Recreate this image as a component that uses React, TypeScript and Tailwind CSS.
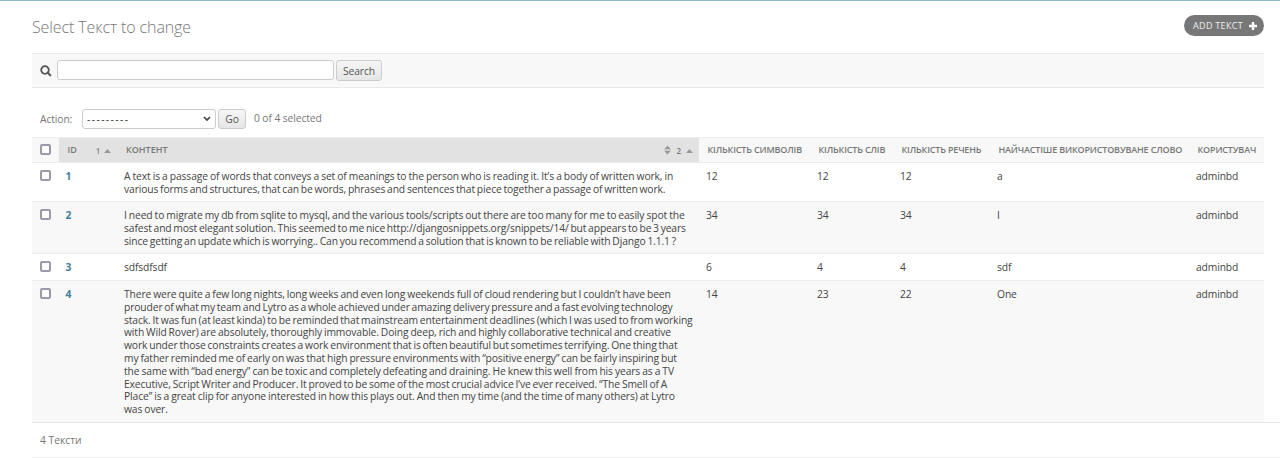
import type { ReactNode } from "react";

type Line = [text: string, spacing: string];
type Row = { id: number; height: string; lines: Line[]; values: string[]; shaded: boolean };

const columns =
  "grid grid-cols-[27px_58px_582px_111px_83px_97px_199px_75px] w-[1232px]";

const rows: Row[] = [
  {
    id: 1,
    height: "h-[39px] border-b border-[#ececec]",
    shaded: false,
    lines: [
      ["A text is a passage of words that conveys a set of meanings to the person who is reading it. It’s a body of written work, in", "[word-spacing:-0.43px]"],
      ["various forms and structures, that can be words, phrases and sentences that piece together a passage of written work.", "[word-spacing:-0.7px]"],
    ],
    values: ["12", "12", "12", "a", "adminbd"],
  },
  {
    id: 2,
    height: "h-[52px] border-b border-[#ececec]",
    shaded: true,
    lines: [
      ["I need to migrate my db from sqlite to mysql, and the various tools/scripts out there are too many for me to easily spot the", "[word-spacing:-0.48px]"],
      ["safest and most elegant solution. This seemed to me nice http://djangosnippets.org/snippets/14/ but appears to be 3 years", "[word-spacing:-0.75px]"],
      ["since getting an update which is worrying.. Can you recommend a solution that is known to be reliable with Django 1.1.1 ?", "[word-spacing:-0.7px]"],
    ],
    values: ["34", "34", "34", "I", "adminbd"],
  },
  {
    id: 3,
    height: "h-[27px] border-b border-[#ececec]",
    shaded: false,
    lines: [["sdfsdfsdf", "[word-spacing:0px]"]],
    values: ["6", "4", "4", "sdf", "adminbd"],
  },
  {
    id: 4,
    height: "h-[141px]",
    shaded: true,
    lines: [
      ["There were quite a few long nights, long weeks and even long weekends full of cloud rendering but I couldn’t have been", "[word-spacing:-0.5px]"],
      ["prouder of what my team and Lytro as a whole achieved under amazing delivery pressure and a fast evolving technology", "[word-spacing:-0.75px]"],
      ["stack. It was fun (at least kinda) to be reminded that mainstream entertainment deadlines (which I was used to from working", "[word-spacing:-0.63px]"],
      ["with Wild Rover) are absolutely, thoroughly immovable. Doing deep, rich and highly collaborative technical and creative", "[word-spacing:-0.55px]"],
      ["work under those constraints creates a work environment that is often beautiful but sometimes terrifying. One thing that", "[word-spacing:-0.68px]"],
      ["my father reminded me of early on was that high pressure environments with “positive energy” can be fairly inspiring but", "[word-spacing:-0.6px]"],
      ["the same with “bad energy” can be toxic and completely defeating and draining. He knew this well from his years as a TV", "[word-spacing:-0.47px]"],
      ["Executive, Script Writer and Producer. It proved to be some of the most crucial advice I’ve ever received. “The Smell of A", "[word-spacing:-0.6px]"],
      ["Place” is a great clip for anyone interested in how this plays out. And then my time (and the time of many others) at Lytro", "[word-spacing:-0.48px]"],
      ["was over.", "[word-spacing:-0.5px]"],
    ],
    values: ["14", "23", "22", "One", "adminbd"],
  },
];

function Checkbox() {
  return (
    <input
      type="checkbox"
      className="block size-[11px] appearance-none rounded-[2px] border-2 border-[#9a9aa8] bg-white"
    />
  );
}

function Up() {
  return (
    <svg width="7" height="4" viewBox="0 0 7 4" className="block">
      <path d="M0 4 3.5 0 7 4Z" fill="#999" />
    </svg>
  );
}

function Head({ children }: { children: ReactNode }) {
  return <div className="pl-[8.5px] tracking-[-0.17px] whitespace-nowrap">{children}</div>;
}

export default function App() {
  return (
    <div className="h-[458px] overflow-hidden border-t border-[#86b8d0] bg-white pl-8 font-['Open_Sans',sans-serif] text-[10.3px] leading-[12.8px] text-[#444]">
      <header className="flex h-[52px] w-[1232px] justify-between">
        <h1 className="pt-[15px] text-[16px] leading-[22px] font-light tracking-[-0.11px] text-[#777]">Select Текст to change</h1>
        <button className="mt-[14px] flex h-[21px] w-[80px] items-center justify-center gap-[6px] rounded-full bg-[#777] pt-px pl-[2px] text-[9px] tracking-[0.3px] text-[#eee]">
          ADD ТЕКСТ
          <svg width="8" height="8" viewBox="0 0 8 8" className="mb-px">
            <path d="M4 0V8M0 4H8" stroke="#fff" strokeWidth="2.4" />
          </svg>
        </button>
      </header>
      <div className="flex h-[35px] w-[1232px] items-center border-y border-[#e9e9e9] bg-[#f8f8f8] pl-2">
        <svg width="12" height="12" viewBox="0 0 12 12" className="mt-px">
          <circle cx="5" cy="5" r="3.8" fill="none" stroke="#555" strokeWidth="1.8" />
          <path d="m7.8 7.8 2.6 2.6" stroke="#555" strokeWidth="2" strokeLinecap="round" />
        </svg>
        <input className="mb-px ml-[5px] h-5 w-[277px] rounded-[3px] border border-[#ccc] bg-white" />
        <button className="ml-[2px] h-[21px] w-[46px] rounded-[3px] border border-[#ccc] bg-linear-to-b from-[#f6f6f6] to-[#e6e6e6] pt-px tracking-[-0.1px] text-[#555]">
          Search
        </button>
      </div>
      <div className="flex h-[49px] items-start pt-[21px] pl-2 tracking-[-0.1px] text-[#777]">
        <span className="w-[42px] pt-[4px]">Action:</span>
        <div className="flex h-5 w-[134px] items-center justify-between rounded-[3px] border border-[#ccc] bg-white px-[4px] text-[#333]">
          <span className="tracking-[1.4px]">---------</span>
          <svg width="8" height="6" viewBox="0 0 8 6">
            <path d="m1 1 3 3 3-3" fill="none" stroke="#444" strokeWidth="1.7" />
          </svg>
        </div>
        <button className="ml-[2px] h-5 w-7 rounded-[3px] border border-[#ccc] bg-linear-to-b from-[#f6f6f6] to-[#e6e6e6] text-[#555]">
          Go
        </button>
        <span className="pt-[3px] pl-2">0 of 4 selected</span>
      </div>
      <div className={`${columns} h-[26px] items-center border-y border-[#ececec] bg-[#f8f8f8] text-[9px] font-semibold text-[#777]`}>
        <div className="pb-[2px] pl-2"><Checkbox /></div>
        <div className="flex h-full items-center bg-[#e2e2e2] pl-[8.5px]">
          <span>ID</span>
          <span className="ml-[19px] pt-[2px] text-[8px] text-[#888]">1</span>
          <span className="ml-[4px] pt-[2px]"><Up /></span>
        </div>
        <div className="flex h-full items-center bg-[#e2e2e2] pr-[6px] pl-[9px]">
          <span className="grow">КОНТЕНТ</span>
          <svg width="7" height="12" viewBox="0 0 7 12">
            <path d="M.5 5 3.5 1.5 6.5 5ZM.5 7h6L3.5 10.5Z" fill="#999" />
            <path d="M0 6h7" stroke="#999" strokeWidth=".6" />
          </svg>
          <span className="ml-[5px] pt-[2px] text-[8px] text-[#777]">2</span>
          <span className="ml-[5px] pt-[2px]"><Up /></span>
        </div>
        <Head>КІЛЬКІСТЬ СИМВОЛІВ</Head>
        <Head>КІЛЬКІСТЬ СЛІВ</Head>
        <Head>КІЛЬКІСТЬ РЕЧЕНЬ</Head>
        <Head>НАЙЧАСТІШЕ ВИКОРИСТОВУВАНЕ СЛОВО</Head>
        <Head>КОРИСТУВАЧ</Head>
      </div>
      {rows.map((row) => (
        <div key={row.id} className={`${columns} ${row.height} ${row.shaded ? "bg-[#f8f8f8]" : "bg-white"} pt-[7px]`}>
          <div className="pl-2"><Checkbox /></div>
          <div className="pl-[6.5px] font-bold text-[#447e9b]">{row.id}</div>
          <div className="pl-[7px] tracking-[-0.12px] whitespace-nowrap">
            {row.lines.map(([text, spacing]) => (
              <div key={text} className={spacing}>{text}</div>
            ))}
          </div>
          {row.values.map((value, i) => (
            <div key={i} className="pl-[7px] tracking-[-0.12px]">{value}</div>
          ))}
        </div>
      ))}
      <footer className="h-[36px] border-y border-t-[#e6e6e6] border-b-[#eee] pt-[11px] pl-2 text-[#777]">4 Тексти</footer>
    </div>
  );
}
